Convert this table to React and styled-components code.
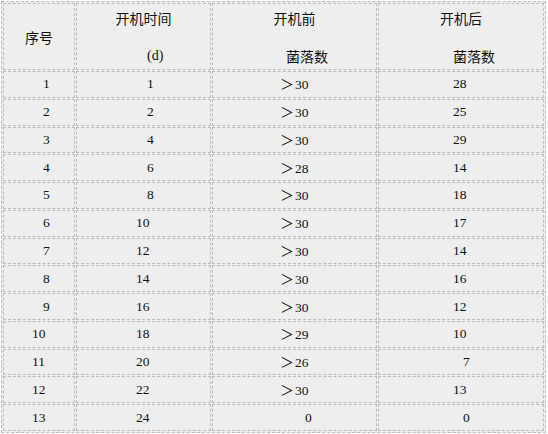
import React from 'react';
import styled, { createGlobalStyle } from 'styled-components';

const GlobalStyle = createGlobalStyle`
  body {
    margin: 0;
    background: #ffffff;
  }
`;

const Table = styled.table`
  margin: 1px;
  width: 545px;
  table-layout: fixed;
  border-collapse: separate;
  border-spacing: 1px;
  border: 1px dashed #bcbcbc;
  background: #eeeeee;
  color: #111111;
  font-family: 'Liberation Serif', 'Noto Sans CJK SC', serif;
`;

const HeadCell = styled.td`
  box-sizing: border-box;
  width: ${(p) => p.$w}px;
  height: 67px;
  padding: 0;
  border: 1px dashed #bcbcbc;
  vertical-align: top;
  font-family: 'Noto Sans CJK SC', sans-serif;
  font-size: 14px;
  line-height: 20px;
`;

const Centered = styled.div`
  display: flex;
  align-items: center;
  justify-content: center;
  height: 65px;
`;

const TopLine = styled.div`
  margin-top: 4px;
  text-align: center;
`;

const SubLine = styled.div`
  margin-top: 18px;
  padding-left: ${(p) => p.$pad}px;
  white-space: nowrap;
  font-family: ${(p) => (p.$latin ? "'Liberation Serif', serif" : "'Noto Sans CJK SC', sans-serif")};
  font-size: 14px;
`;

const Cell = styled.td`
  box-sizing: border-box;
  height: 26.77px;
  padding: 0 0 0 ${(p) => p.$pad}px;
  border: 1px dashed #bcbcbc;
  vertical-align: middle;
  white-space: nowrap;
  font-size: 13.5px;
  line-height: 16px;
`;

const Gt = styled.span`
  font-family: 'Noto Sans CJK SC', sans-serif;
  font-size: 14px;
  margin-right: 1px;
`;

const rows = [
  [1, 1, '30', 28],
  [2, 2, '30', 25],
  [3, 4, '30', 29],
  [4, 6, '28', 14],
  [5, 8, '30', 18],
  [6, 10, '30', 17],
  [7, 12, '30', 14],
  [8, 14, '30', 16],
  [9, 16, '30', 12],
  [10, 18, '29', 10],
  [11, 20, '26', 7],
  [12, 22, '30', 13],
  [13, 24, null, 0],
];

const wide = (n) => String(n).length > 1;

export default function App() {
  return (
    <>
      <GlobalStyle />
      <Table>
        <tbody>
          <tr>
            <HeadCell $w={72}>
              <Centered>序号</Centered>
            </HeadCell>
            <HeadCell $w={135}>
              <TopLine>开机时间</TopLine>
              <SubLine $pad={70} $latin>(d)</SubLine>
            </HeadCell>
            <HeadCell $w={165}>
              <TopLine>开机前</TopLine>
              <SubLine $pad={73}>菌落数</SubLine>
            </HeadCell>
            <HeadCell $w={166}>
              <TopLine>开机后</TopLine>
              <SubLine $pad={74}>菌落数</SubLine>
            </HeadCell>
          </tr>
          {rows.map(([no, day, before, after]) => (
            <tr key={no}>
              <Cell $pad={wide(no) ? 28 : 39}>{no}</Cell>
              <Cell $pad={wide(day) ? 59 : 70}>{day}</Cell>
              {before ? (
                <Cell $pad={67}>
                  <Gt>＞</Gt>
                  {before}
                </Cell>
              ) : (
                <Cell $pad={92}>0</Cell>
              )}
              <Cell $pad={wide(after) ? 74 : 84}>{after}</Cell>
            </tr>
          ))}
        </tbody>
      </Table>
    </>
  );
}
